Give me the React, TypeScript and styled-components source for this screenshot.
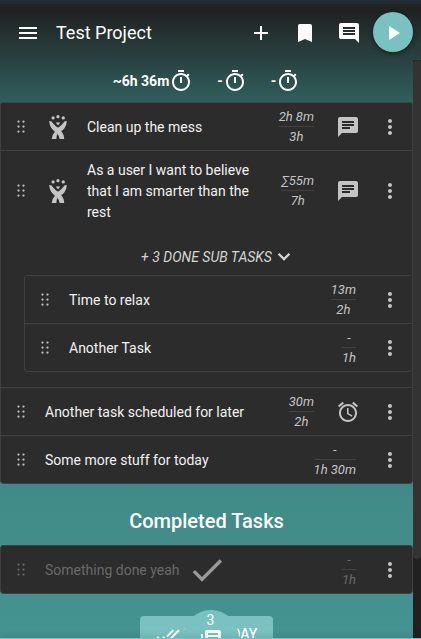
import React from "react";
import styled, { createGlobalStyle } from "styled-components";

const GlobalStyle = createGlobalStyle`
  *, *::before, *::after { box-sizing: border-box; }
  body { margin: 0; font-family: Roboto, "Liberation Sans", sans-serif; color: #fff; }
  button { font: inherit; color: inherit; background: none; border: 0; padding: 0; cursor: pointer; }
  ul, h1, h2 { margin: 0; padding: 0; font-weight: 400; }
  ul { list-style: none; }
`;

const paths = {
  menu: "M3 18h18v-2H3v2zm0-5h18v-2H3v2zm0-7v2h18V6H3z",
  add: "M19 13h-6v6h-2v-6H5v-2h6V5h2v6h6v2z",
  bookmark: "M17 3H7c-1.1 0-1.99.9-1.99 2L5 21l7-3 7 3V5c0-1.1-.9-2-2-2z",
  comment:
    "M21.99 4c0-1.1-.89-2-1.99-2H4c-1.1 0-2 .9-2 2v12c0 1.1.9 2 2 2h14l4 4-.01-18zM18 14H6v-2h12v2zm0-3H6V9h12v2zm0-3H6V6h12v2z",
  play: "M8 5v14l11-7z",
  timer:
    "M15 1H9v2h6V1zm-4 13h2V8h-2v6zm8.03-6.61l1.42-1.42c-.43-.51-.9-.99-1.41-1.41l-1.42 1.42C16.07 4.74 14.12 4 12 4c-4.97 0-9 4.03-9 9s4.02 9 9 9 9-4.03 9-9c0-2.12-.74-4.07-1.97-5.61zM12 20c-3.87 0-7-3.13-7-7s3.13-7 7-7 7 3.13 7 7-3.13 7-7 7z",
  chat: "M20 2H4c-1.1 0-1.99.9-1.99 2L2 22l4-4h14c1.1 0 2-.9 2-2V4c0-1.1-.9-2-2-2zM6 9h12v2H6V9zm8 5H6v-2h8v2zm4-6H6V6h12v2z",
  more: "M12 8c1.1 0 2-.9 2-2s-.9-2-2-2-2 .9-2 2 .9 2 2 2zm0 2c-1.1 0-2 .9-2 2s.9 2 2 2 2-.9 2-2-.9-2-2-2zm0 6c-1.1 0-2 .9-2 2s.9 2 2 2 2-.9 2-2-.9-2-2-2z",
  alarm:
    "M22 5.72l-4.6-3.86-1.29 1.53 4.6 3.86L22 5.72zM7.88 3.39L6.6 1.86 2 5.71l1.29 1.53 4.59-3.85zM12.5 8H11v6l4.75 2.85.75-1.23-4-2.37V8zM12 4c-4.97 0-9 4.03-9 9s4.02 9 9 9c4.97 0 9-4.03 9-9s-4.03-9-9-9zm0 16c-3.87 0-7-3.13-7-7s3.13-7 7-7 7 3.13 7 7-3.13 7-7 7z",
  expand: "M16.59 8L12 12.6 7.41 8 5.8 9.6l6.2 6.2 6.2-6.2z",
  check: "M9 16.17L4.83 12l-1.42 1.41L9 19 21 7l-1.41-1.41z",
  doneAll:
    "M18 7l-1.41-1.41-6.34 6.34 1.41 1.41L18 7zm4.24-1.41L11.66 16.17 7.48 12l-1.41 1.41L11.66 19l12-12-1.42-1.41zM.41 13.41L6 19l1.41-1.41L1.83 12 .41 13.41z",
  library:
    "M4 6H2v14c0 1.1.9 2 2 2h14v-2H4V6zm16-4H8c-1.1 0-2 .9-2 2v12c0 1.1.9 2 2 2h12c1.1 0 2-.9 2-2V4c0-1.1-.9-2-2-2zm-1 9H9V9h10v2zm-4 4H9v-2h6v2zm4-8H9V5h10v2z",
};

type IconName = keyof typeof paths;

const Svg = styled.svg`
  display: block;
  flex: none;
  fill: currentColor;
`;

const Icon = ({ name, size = 24 }: { name: IconName; size?: number }) => (
  <Svg width={size} height={size} viewBox="0 0 24 24" aria-hidden="true">
    <path d={paths[name]} />
  </Svg>
);

const DragIcon = () => (
  <Svg width={18} height={18} viewBox="0 0 18 18" aria-hidden="true">
    {[4, 9, 14].map((y) => (
      <React.Fragment key={y}>
        <circle cx="6.5" cy={y - 0.4} r="1.15" />
        <circle cx="11.5" cy={y - 0.4} r="1.15" />
      </React.Fragment>
    ))}
  </Svg>
);

const JiraIcon = () => (
  <Svg width={18} height={24} viewBox="0 0 54 73" role="img" aria-label="Jira issue">
    <circle cx="12" cy="9" r="5" />
    <circle cx="27" cy="5" r="5" />
    <circle cx="43" cy="9" r="5" />
    <path d="M21 22Q27 24 33 22Q32 28 27 31Q22 28 21 22Z" />
    <path d="M0 18L8 20Q11 27 27 39L37 49Q45 59 46 73H32Q32 65 25 58L12 46Q2 36 0 18Z" />
    <path d="M54 18L46 20Q43 27 27 39L24 42L32 51L42 46Q52 36 54 18Z" />
    <path d="M18 50L25 58Q22 65 22 73H8Q9 59 18 50Z" />
  </Svg>
);

const Page = styled.div`
  position: relative;
  display: flex;
  flex-direction: column;
  height: 100vh;
  overflow: hidden;
  background: linear-gradient(#202020 0, #212323 2%, #305f5c 16%, #418a87 77%, #459491 100%);
`;

const StatusStrip = styled.div`
  flex: none;
  height: 4px;
  background: #222d33;
`;

const IconButton = styled.button`
  flex: none;
  display: grid;
  place-items: center;
  width: 40px;
  height: 40px;
`;

const Header = styled.header`
  flex: none;
  display: flex;
  align-items: center;
  gap: 4px;
  height: 56px;
  padding: 0 8px;

  ${IconButton} { padding-top: 2px; }
`;

const PlayButton = styled(IconButton)`
  border-radius: 50%;
  background: #79c2c1;
  box-shadow: 0 2px 5px rgba(0, 0, 0, 0.4);
`;

const Title = styled.h1`
  flex: 1;
  padding: 2px 0 0 4px;
  font-size: 18px;
  line-height: 24px;
`;

const Body = styled.div`
  flex: 1;
  min-height: 0;
  display: flex;
`;

const Content = styled.main`
  flex: 1;
  min-width: 0;
  overflow: hidden;
`;

const ScrollTrack = styled.div`
  flex: none;
  width: 8px;
  background: #212121;
`;

const ScrollThumb = styled.div`
  height: 86.4%;
  border-radius: 4px;
  background: #333;
`;

const Summary = styled.div`
  display: flex;
  align-items: center;
  justify-content: center;
  gap: 24px;
  height: 42px;
  font-size: 14px;
  font-weight: 700;
`;

const SummaryItem = styled.span`
  display: flex;
  align-items: center;
`;

const Card = styled.ul`
  overflow: hidden;
  border: 1px solid #404040;
  border-top: 0;
  border-radius: 4px;
  background: #2c2c2c;
`;

const SubList = styled.ul`
  margin: 0 0 15px 23px;
  border: 1px solid #404040;
  border-width: 0 0 1px 1px;
  border-radius: 4px;
  overflow: hidden;
`;

const Item = styled.li`
  border-top: 1px solid #404040;
`;

const Row = styled.div<{ $done?: boolean }>`
  position: relative;
  display: flex;
  align-items: center;
  min-height: 47px;
  padding: 8px 2px 8px 11px;
  color: ${(p) => (p.$done ? "#6a6a6a" : "#c4c4c4")};
`;

const Handle = styled.span`
  flex: none;
  margin-right: 15px;
`;

const Source = styled.span`
  flex: none;
  margin: 0 20px 0 4px;
`;

const TaskTitle = styled.span<{ $done?: boolean }>`
  flex: 1;
  margin: 1px 0 -1px;
  font-size: 14px;
  line-height: 21px;
  color: ${(p) => (p.$done ? "inherit" : "#f2f2f2")};
`;

const Times = styled.span`
  flex: none;
  margin: -8px 14px -8px 24px;
  font-size: 13px;
  font-style: italic;
  line-height: 19px;
  text-align: center;
`;

const Spent = styled.span`
  display: block;
  border-bottom: 1px solid #424242;
`;

const Actions = styled.span`
  flex: none;
  display: flex;
  gap: 2px;
  margin: -8px 0;
  color: #c4c4c4;
`;

const DoneMark = styled.span`
  position: absolute;
  inset: 0;
  display: grid;
  place-items: center;
  color: #999;
  pointer-events: none;
`;

const SubToggle = styled.button`
  display: flex;
  align-items: center;
  justify-content: center;
  width: 100%;
  height: 45px;
  padding: 9px 0 0 24px;
  font-size: 14px;
  font-style: italic;
  color: #d6d6d6;
`;

const SectionTitle = styled.h2`
  padding: 25px 0 12px;
  font-size: 20px;
  font-weight: 500;
  line-height: 24px;
  text-align: center;
`;

const FinishButton = styled.button`
  display: flex;
  justify-content: center;
  align-items: center;
  gap: 4px;
  height: 36px;
  margin: 22px auto 0;
  padding: 0 16px;
  border-radius: 4px;
  background: #79c2c1;
  font-size: 14px;
  font-weight: 500;
  line-height: 36px;
  white-space: nowrap;

  svg { margin-top: 4px; }
`;

const NotesButton = styled.button`
  position: absolute;
  bottom: -27px;
  left: 0;
  right: 0;
  display: flex;
  flex-direction: column;
  align-items: center;
  width: 56px;
  height: 56px;
  margin: 0 auto;
  padding-top: 2px;
  border-radius: 50%;
  background: #79c2c1;
  font-size: 14px;
  line-height: 16px;
`;

const BottomEdge = styled.div`
  position: relative;
  flex: none;
  height: 1px;
  background: #79c2c1;
  box-shadow: 0 0 6px rgba(0, 0, 0, 0.6);
`;

type TaskProps = {
  title: string;
  spent: string;
  estimate: string;
  jira?: boolean;
  extra?: "chat" | "alarm";
  done?: boolean;
  children?: React.ReactNode;
};

const Task = ({ title, spent, estimate, jira, extra, done, children }: TaskProps) => (
  <Item>
    <Row $done={done}>
      <Handle><DragIcon /></Handle>
      {jira && <Source><JiraIcon /></Source>}
      <TaskTitle $done={done}>{title}</TaskTitle>
      <Times>
        <Spent>{spent}</Spent>
        {estimate}
      </Times>
      <Actions>
        {extra && (
          <IconButton aria-label={extra === "chat" ? "Notes" : "Reminder"}>
            <Icon name={extra} />
          </IconButton>
        )}
        <IconButton aria-label="More options"><Icon name="more" /></IconButton>
      </Actions>
      {done && <DoneMark><Icon name="check" size={40} /></DoneMark>}
    </Row>
    {children}
  </Item>
);

export default function App() {
  return (
    <Page>
      <GlobalStyle />
      <StatusStrip />
      <Header>
        <IconButton aria-label="Menu"><Icon name="menu" /></IconButton>
        <Title>Test Project</Title>
        <IconButton aria-label="Add task"><Icon name="add" /></IconButton>
        <IconButton aria-label="Bookmarks"><Icon name="bookmark" /></IconButton>
        <IconButton aria-label="Project notes"><Icon name="comment" /></IconButton>
        <PlayButton aria-label="Start tracking"><Icon name="play" /></PlayButton>
      </Header>
      <Body>
        <Content>
          <Summary>
            {["~6h 36m", "-", "-"].map((value, i) => (
              <SummaryItem key={i}>{value}<Icon name="timer" /></SummaryItem>
            ))}
          </Summary>
          <Card>
            <Task title="Clean up the mess" spent="2h 8m" estimate="3h" jira extra="chat" />
            <Task
              title="As a user I want to believe that I am smarter than the rest"
              spent="∑55m"
              estimate="7h"
              jira
              extra="chat"
            >
              <SubToggle>+ 3 DONE SUB TASKS<Icon name="expand" /></SubToggle>
              <SubList>
                <Task title="Time to relax" spent="13m" estimate="2h" />
                <Task title="Another Task" spent="-" estimate="1h" />
              </SubList>
            </Task>
            <Task title="Another task scheduled for later" spent="30m" estimate="2h" extra="alarm" />
            <Task title="Some more stuff for today" spent="-" estimate="1h 30m" />
          </Card>
          <SectionTitle>Completed Tasks</SectionTitle>
          <Card>
            <Task title="Something done yeah" spent="-" estimate="1h" done />
          </Card>
          <FinishButton><Icon name="doneAll" />FINISH DAY</FinishButton>
        </Content>
        <ScrollTrack><ScrollThumb /></ScrollTrack>
      </Body>
      <NotesButton aria-label="3 notes">3<Icon name="library" /></NotesButton>
      <BottomEdge />
    </Page>
  );
}
